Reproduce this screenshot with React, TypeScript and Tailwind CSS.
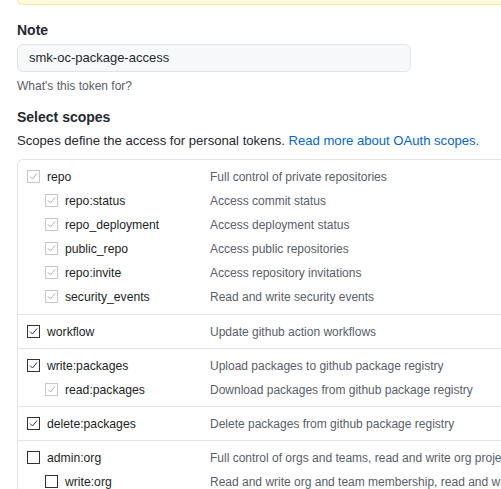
import React from "react";

type Row = { name: string; desc: string; state: "dis" | "on" | "off"; child?: boolean };

const sections: Row[][] = [
  [
    { name: "repo", desc: "Full control of private repositories", state: "dis" },
    { name: "repo:status", desc: "Access commit status", state: "dis", child: true },
    { name: "repo_deployment", desc: "Access deployment status", state: "dis", child: true },
    { name: "public_repo", desc: "Access public repositories", state: "dis", child: true },
    { name: "repo:invite", desc: "Access repository invitations", state: "dis", child: true },
    { name: "security_events", desc: "Read and write security events", state: "dis", child: true },
  ],
  [{ name: "workflow", desc: "Update github action workflows", state: "on" }],
  [
    { name: "write:packages", desc: "Upload packages to github package registry", state: "on" },
    { name: "read:packages", desc: "Download packages from github package registry", state: "dis", child: true },
  ],
  [{ name: "delete:packages", desc: "Delete packages from github package registry", state: "on" }],
  [
    { name: "admin:org", desc: "Full control of orgs and teams, read and write org projects", state: "off" },
    { name: "write:org", desc: "Read and write org and team membership, read and write org projects", state: "off", child: true },
  ],
];

function Box({ state }: { state: "dis" | "on" | "off" }) {
  const border = state === "dis" ? "#c8c8c8" : "#333333";
  const check = state === "dis" ? "#b0b0b0" : "#333333";
  return (
    <svg width="13" height="13" viewBox="0 0 13 13" className="shrink-0">
      <rect x="0.5" y="0.5" width="12" height="12" fill="#ffffff" stroke={border} />
      {state !== "off" && (
        <path d="M3 6.5 L5.5 9 L10 3.5" fill="none" stroke={check} strokeWidth="1" />
      )}
    </svg>
  );
}

export default function App() {
  return (
    <div
      className="w-[501px] h-[489px] overflow-hidden bg-white text-[#24292e]"
      style={{ fontFamily: '"Segoe UI", "Liberation Sans", Arial, sans-serif' }}
    >
      <div className="ml-[17px] w-[560px] h-[6px] -mt-px bg-[#fffbdd] border border-[#f1e5a9] rounded-bl-[6px]" />
      <div className="pl-[17px]">
        <div className="mt-[15px] text-[14px] font-semibold leading-[20px]">Note</div>
        <div className="mt-[4px] w-[394px] h-[28px] rounded-[6px] border border-[#e1e4e8] bg-[#f7f8fa] flex items-center pl-[11px] text-[13px]">
          smk-oc-package-access
        </div>
        <div className="mt-[5px] text-[12px] leading-[18px] text-[#586069]">What's this token for?</div>
        <div className="mt-[12px] text-[14px] font-semibold leading-[20px]">Select scopes</div>
        <div className="mt-[4px] text-[13.1px] leading-[20px] whitespace-nowrap">
          Scopes define the access for personal tokens.{" "}
          <span className="text-[#0366d6]">Read more about OAuth scopes.</span>
        </div>
        <div className="mt-[8px] w-[560px] border-l border-t border-[#e1e4e8] rounded-tl-[6px]">
          {sections.map((sec, i) => (
            <div key={i} className={`${i === 0 ? "py-[5px]" : "pt-[5px] pb-[4px]"} border-b border-[#e1e4e8]`}>
              {sec.map((r) => (
                <div key={r.name} className="h-[24px] flex items-center text-[12.2px]">
                  <div className={`w-[192px] shrink-0 flex items-center ${r.child ? "pl-[27px]" : "pl-[9px]"}`}>
                    <Box state={r.state} />
                    <span className="ml-[7px] text-[#1b1f23]">{r.name}</span>
                  </div>
                  <div className="text-[#586069] whitespace-nowrap text-[12px]">{r.desc}</div>
                </div>
              ))}
            </div>
          ))}
        </div>
      </div>
    </div>
  );
}
